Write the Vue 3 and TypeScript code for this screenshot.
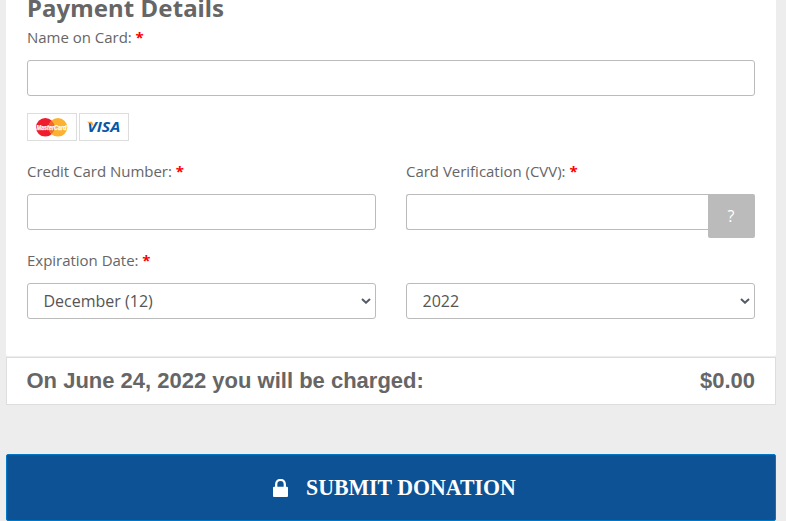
<script setup lang="ts">
import { ref } from 'vue'

const cardName = ref('')
const cardNumber = ref('')
const cvv = ref('')
const month = ref('12')
const year = ref('2022')
</script>

<template>
  <form class="page" @submit.prevent>
    <section class="panel">
      <h2 class="title"><span>Payment Details</span></h2>
      <label class="label" for="name">Name on Card: <b>*</b></label>
      <input id="name" v-model="cardName" class="control" type="text" />

      <div class="cards">
        <span class="card">
          <svg width="48" height="26" viewBox="0 0 48 26">
            <circle cx="17.3" cy="13.3" r="9.3" fill="#ee1c2e" />
            <circle cx="29.900" cy="13.3" r="9.3" fill="#fcb131" />
            <path d="M23.600 6.500a9.3 9.3 0 0 1 0 13.600a9.3 9.3 0 0 1 0-13.600z" fill="#f26a2a" />
            <text class="mc" x="8.500" y="15.7" textLength="30" lengthAdjust="spacingAndGlyphs">MasterCard</text>
          </svg>
        </span>
        <span class="card">
          <svg width="48" height="26" viewBox="0 0 48 26">
            <text class="visa" x="7.300" y="18.300" textLength="33" lengthAdjust="spacingAndGlyphs">VISA</text>
            <path d="M6.500 7.800h4.600q1.300 0 1.600 1.300l.7 3.600Q11.500 9.400 6.500 7.800z" fill="#f9a533" />
          </svg>
        </span>
      </div>

      <div class="grid">
        <div class="field">
          <label class="label" for="number">Credit Card Number: <b>*</b></label>
          <input id="number" v-model="cardNumber" class="control" type="text" />
        </div>
        <div class="field">
          <label class="label" for="cvv">Card Verification (CVV): <b>*</b></label>
          <div class="group">
            <input id="cvv" v-model="cvv" class="control" type="text" />
            <button class="help" type="button">?</button>
          </div>
        </div>
      </div>

      <label class="label expiry" for="month">Expiration Date: <b>*</b></label>
      <div class="grid">
        <div class="select">
          <select id="month" v-model="month" class="control">
            <option value="12">December (12)</option>
          </select>
          <svg class="chevron" width="10" height="6" viewBox="0 0 10 6"><path d="M1 .9l4 3.800 4-3.800" /></svg>
        </div>
        <div class="select">
          <select v-model="year" class="control">
            <option value="2022">2022</option>
          </select>
          <svg class="chevron" width="10" height="6" viewBox="0 0 10 6"><path d="M1 .9l4 3.800 4-3.800" /></svg>
        </div>
      </div>
    </section>

    <div class="total">
      <span>On June 24, 2022 you will be charged:</span>
      <span>$0.00</span>
    </div>

    <button class="submit" type="submit">
      <svg width="15" height="18" viewBox="0 0 15 18">
        <path d="M3.200 8V5.200a4.300 4.300 0 0 1 8.600 0V8" fill="none" stroke="#fff" stroke-width="2.300" />
        <rect x="0" y="7.800" width="15" height="10.200" rx="1.100" fill="#fff" />
      </svg>
      <span>SUBMIT DONATION</span>
    </button>
  </form>
</template>

<style>
body {
  background: #ededed;
  overflow: hidden;
}
</style>

<style scoped>
* {
  box-sizing: border-box;
}
.page {
  height: 521px;
  padding: 0 10px 0 6px;
  display: flex;
  flex-direction: column;
  overflow: hidden;
  color: #666;
  font-family: 'Open Sans', 'Noto Sans', sans-serif;
}
.panel {
  height: 356px;
  padding: 0 21px;
  background: #fff;
  border-radius: 0 0 2px 2px;
}
.title {
  height: 26px;
  margin: 0;
  display: flex;
  align-items: flex-end;
  font: bold 24px/36px 'Noto Sans', sans-serif;
  letter-spacing: 0.08px;
  white-space: nowrap;
}
.label {
  display: block;
  height: 22px;
  font-size: 15px;
  line-height: 22px;
  letter-spacing: -0.02px;
  white-space: nowrap;
}
.label b {
  color: #f00;
}
.control {
  display: block;
  width: 100%;
  height: 36px;
  margin: 0;
  padding: 0 16px;
  border: 1px solid #bbb;
  border-radius: 3px;
  outline: 0;
  background: #fff;
  color: #555;
  font: 16px/34px 'Open Sans', sans-serif;
  appearance: none;
}
select.control {
  padding: 0 15.5px 2px;
}
.panel > .control {
  margin-top: 12px;
}
.cards {
  display: flex;
  gap: 2px;
  margin: 17px 0 19px;
}
.card {
  width: 50px;
  height: 28px;
  border: 1px solid #ddd;
}
.card svg {
  display: block;
}
.mc {
  font: italic bold 6.500px 'Liberation Sans', sans-serif;
  fill: #fff;
  stroke: #fff;
  stroke-width: 0.25px;
}
.visa {
  font: italic bold 14.500px 'Open Sans', sans-serif;
  fill: #0857a6;
}
.grid {
  display: grid;
  grid-template-columns: 1fr 1fr;
  gap: 30px;
}
.field .label {
  margin-bottom: 12px;
}
.field {
  height: 70px;
}
.group {
  display: flex;
  align-items: flex-start;
}
.group .control {
  flex: 1;
  min-width: 0;
  border-right: 0;
  border-radius: 3px 0 0 3px;
}
.help {
  width: 47px;
  height: 44px;
  padding: 0 1px 0 0;
  border: 0;
  border-radius: 0 2px 2px 2px;
  background: #bbb;
  color: #fff;
  font: 16px 'Open Sans', sans-serif;
}
.expiry {
  margin: 19px 0 12px;
}
.select {
  position: relative;
}
.chevron {
  position: absolute;
  right: 5px;
  top: 15px;
  fill: none;
  stroke: #555b66;
  stroke-width: 2px;
}
.total {
  height: 48px;
  margin-top: 1px;
  padding: 0 20px 0 19.5px;
  display: flex;
  align-items: center;
  justify-content: space-between;
  border: 1px solid #ddd;
  background: #fff;
  font: bold 22px/46px 'Liberation Sans', sans-serif;
}
.submit {
  height: 67px;
  margin-top: 49px;
  padding: 0 0 0 6px;
  display: flex;
  align-items: center;
  justify-content: center;
  gap: 18px;
  border: 1px solid #0078c8;
  border-radius: 2px;
  background: #0d5294;
  color: #fff;
  font: bold 24px 'Liberation Serif', serif;
  white-space: nowrap;
}
.submit span {
  width: 210px;
  transform: scaleX(0.91);
  transform-origin: left;
}
</style>
